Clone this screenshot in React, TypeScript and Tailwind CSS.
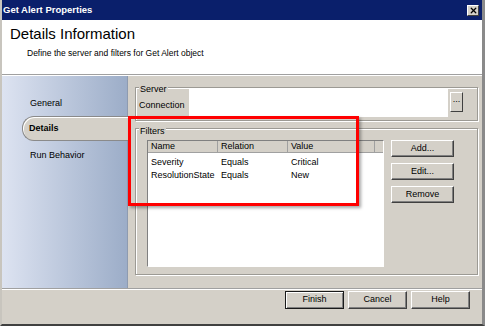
import { X } from "lucide-react";

const font = { fontFamily: '"Liberation Sans", Arial, sans-serif' };

function WinButton({ label, primary }: { label: string; primary?: boolean }) {
  return (
    <button
      className={`flex h-[18px] w-[59px] items-center justify-center bg-[#d4d0c8] text-[9px] text-black ${
        primary
          ? "border border-[#1a1a1a] shadow-[inset_1px_1px_0_#fff,inset_-1px_-1px_0_#808080]"
          : "border border-b-[#404040] border-l-white border-r-[#404040] border-t-white shadow-[inset_-1px_-1px_0_#808080]"
      }`}
    >
      {label}
    </button>
  );
}

function SideButton({ label }: { label: string }) {
  return (
    <button className="flex h-[17px] w-[63px] items-center justify-center border border-b-[#404040] border-l-white border-r-[#404040] border-t-white bg-[#d4d0c8] text-[9px] text-black shadow-[inset_-1px_-1px_0_#808080]">
      {label}
    </button>
  );
}

const rows = [
  { name: "Severity", relation: "Equals", value: "Critical" },
  { name: "ResolutionState", relation: "Equals", value: "New" },
];

export default function App() {
  return (
    <div
      className="relative flex h-[326px] w-[485px] flex-col overflow-hidden border-b-2 border-l-2 border-r-[3px] border-b-[#404040] border-l-[#c8c5be] border-r-[#8a8a8a] bg-[#d4d0c8] text-black"
      style={font}
    >
      {/* title bar */}
      <div className="flex h-[20px] shrink-0 items-center justify-between bg-[#0a1f6b] pl-[1px] pr-[3px]">
        <span className="text-[9.5px] font-bold text-white">Get Alert Properties</span>
        <span className="flex h-[11px] w-[12px] items-center justify-center border border-b-[#404040] border-l-white border-r-[#404040] border-t-white bg-[#d4d0c8]">
          <X className="h-[9px] w-[9px] text-black" strokeWidth={3.5} />
        </span>
      </div>

      {/* header */}
      <div className="h-[55px] shrink-0 border-b border-[#a0a0a0] bg-white pl-[8px] pt-[5px]">
        <div className="text-[15px] leading-[18px]">Details Information</div>
        <div className="mt-[4px] pl-[17px] text-[8.5px] leading-[12px]">
          Define the server and filters for Get Alert object
        </div>
      </div>

      {/* body */}
      <div className="flex min-h-0 flex-1 border-t border-white">
        <nav className="w-[126px] shrink-0 border-r border-[#8e9bb0] bg-gradient-to-r from-[#dde3f1] to-[#9cadc8] pt-[21px] text-[9px]">
          <div className="pl-[28px] leading-[12px]">General</div>
          <div className="ml-[20px] mt-[7px] mr-[-1px] flex h-[25px] items-center rounded-l-[12px] border border-r-0 border-[#8a8a8a] bg-[#d4d0c8] pl-[6px] font-bold shadow-[inset_1px_1px_0_#fff]">
            Details
          </div>
          <div className="mt-[8px] pl-[28px] leading-[12px]">Run Behavior</div>
        </nav>

        <main className="flex flex-1 flex-col pl-[7px] pr-[4px] pt-[11px]">
          {/* server group */}
          <div className="relative flex h-[34px] border border-[#9c9a94] shadow-[inset_1px_1px_0_#fff,1px_1px_0_#fff]">
            <span className="absolute left-[3px] top-[-4px] bg-[#d4d0c8] px-[1px] text-[9px] leading-[10px]">
              Server
            </span>
            <div className="flex w-[53px] items-center pl-[3px] pt-[3px] text-[9px]">Connection</div>
            <div className="mb-[3px] h-[29px] w-[259px] bg-white" />
            <div className="ml-[2px] mt-[4px] flex h-[20px] w-[13px] items-start justify-center border border-b-[#404040] border-l-white border-r-[#404040] border-t-white text-[9px] leading-[12px]">
              ...
            </div>
          </div>

          {/* filters group */}
          <div className="relative mt-[7px] flex h-[147px] gap-[7px] border border-[#9c9a94] pl-[11px] pt-[11px] shadow-[inset_1px_1px_0_#fff,1px_1px_0_#fff]">
            <span className="absolute left-[3px] top-[-3px] bg-[#d4d0c8] px-[1px] text-[9px] leading-[10px]">
              Filters
            </span>
            <div className="h-[127px] w-[237px] border border-b-white border-l-[#808080] border-r-white border-t-[#808080] bg-white">
              <div className="grid h-[12px] grid-cols-[70px_70px_87px_1fr] border-b border-[#a0a0a0] bg-[#d4d0c8] text-[9px] leading-[11px]">
                <div className="border-r border-[#a0a0a0] pl-[3px]">Name</div>
                <div className="border-r border-[#a0a0a0] pl-[3px]">Relation</div>
                <div className="border-r border-[#a0a0a0] pl-[3px]">Value</div>
                <div />
              </div>
              <div className="pt-[3px] text-[9px]">
                {rows.map((r) => (
                  <div key={r.name} className="grid h-[13px] grid-cols-[70px_70px_87px] items-center">
                    <div className="pl-[3px]">{r.name}</div>
                    <div className="pl-[3px]">{r.relation}</div>
                    <div className="pl-[3px]">{r.value}</div>
                  </div>
                ))}
              </div>
            </div>
            <div className="flex flex-col gap-[6px]">
              <SideButton label="Add..." />
              <SideButton label="Edit..." />
              <SideButton label="Remove" />
            </div>
          </div>
        </main>
      </div>

      {/* footer */}
      <div className="flex h-[36px] shrink-0 items-start justify-end gap-[4px] border-t border-[#a0a0a0] pr-[12px] pt-[2px] shadow-[inset_0_1px_0_#fff]">
        <WinButton label="Finish" primary />
        <WinButton label="Cancel" />
        <WinButton label="Help" />
      </div>

      {/* highlight annotation */}
      <div className="pointer-events-none absolute left-[126px] top-[116px] h-[90px] w-[231px] border-[3px] border-[#ff0000] shadow-[2px_2px_3px_rgba(0,0,0,0.35)]" />
    </div>
  );
}
